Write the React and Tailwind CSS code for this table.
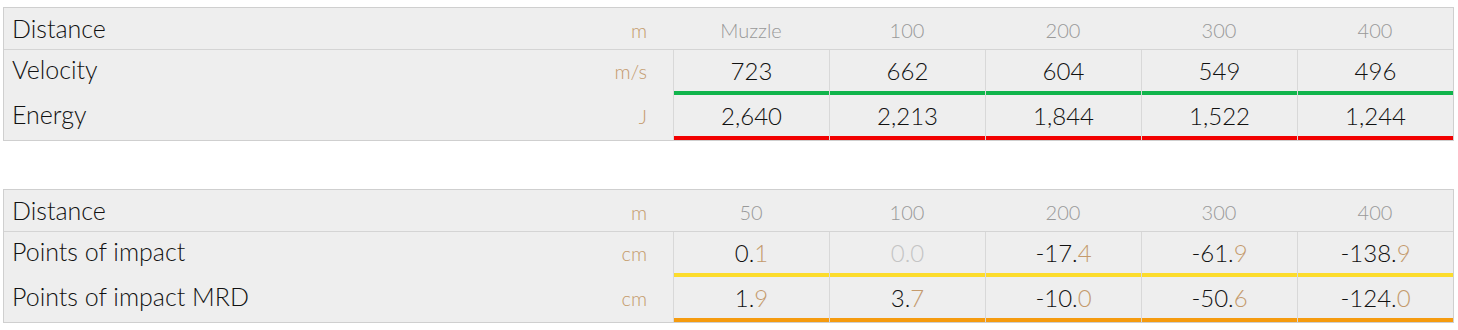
import React from "react";

const tables = [
  {
    header: { label: "Distance", unit: "m", values: ["Muzzle", "100", "200", "300", "400"] },
    rows: [
      { label: "Velocity", unit: "m/s", bar: "bg-[#10b44c]", values: [["723"], ["662"], ["604"], ["549"], ["496"]] },
      { label: "Energy", unit: "J", bar: "bg-[#f20000]", values: [["2,640"], ["2,213"], ["1,844"], ["1,522"], ["1,244"]] },
    ],
  },
  {
    header: { label: "Distance", unit: "m", values: ["50", "100", "200", "300", "400"] },
    rows: [
      {
        label: "Points of impact",
        unit: "cm",
        bar: "bg-[#fcdc2c]",
        values: [["0.", "1"], ["0.0", "", true], ["-17.", "4"], ["-61.", "9"], ["-138.", "9"]],
      },
      {
        label: "Points of impact MRD",
        unit: "cm",
        bar: "bg-[#f59b0f]",
        values: [["1.", "9"], ["3.", "7"], ["-10.", "0"], ["-50.", "6"], ["-124.", "0"]],
      },
    ],
  },
];

function Value({ v }) {
  const [whole, dec, muted] = v;
  if (muted) return <span className="text-[#c4c4c4]">{whole}</span>;
  return (
    <span>
      {whole}
      {dec && <span className="text-[#c49a6c]">{dec}</span>}
    </span>
  );
}

function Table({ data }) {
  return (
    <div className="ml-[3px] w-[1451px] border border-[#cfcfcf] bg-[#eeeeee]">
      <div className="grid grid-cols-[669px_repeat(5,156px)] h-[42px] border-b border-[#d4d4d4]">
        <div className="flex items-baseline justify-between pl-2 pr-[26px] pt-[8px]">
          <span className="text-[25px] font-light text-[#111]">{data.header.label}</span>
          <span className="text-[20px] font-light text-[#c49a6c]">{data.header.unit}</span>
        </div>
        {data.header.values.map((h, i) => (
          <div key={i} className="flex justify-center pt-[12px] text-[20px] font-light text-[#999]">
            {h}
          </div>
        ))}
      </div>
      {data.rows.map((row) => (
        <div key={row.label} className="grid grid-cols-[669px_repeat(5,156px)] h-[45px]">
          <div className="flex items-baseline justify-between pl-2 pr-[26px] pt-[7px]">
            <span className="text-[25px] font-light text-[#111]">{row.label}</span>
            <span className="text-[20px] font-light text-[#c49a6c]">{row.unit}</span>
          </div>
          {row.values.map((v, i) => (
            <div key={i} className="flex flex-col border-l border-[#d8d8d8]">
              <div className="flex-1 flex items-center justify-center text-[24px] font-light text-[#111]">
                <Value v={v} />
              </div>
              <div className={`h-[4px] ${row.bar}`} />
            </div>
          ))}
        </div>
      ))}
    </div>
  );
}

export default function App() {
  return (
    <div className="w-[1458px] h-[330px] bg-white pt-[7px] font-['Lato',sans-serif] leading-none">
      <Table data={tables[0]} />
      <div className="h-[48px]" />
      <Table data={tables[1]} />
    </div>
  );
}
